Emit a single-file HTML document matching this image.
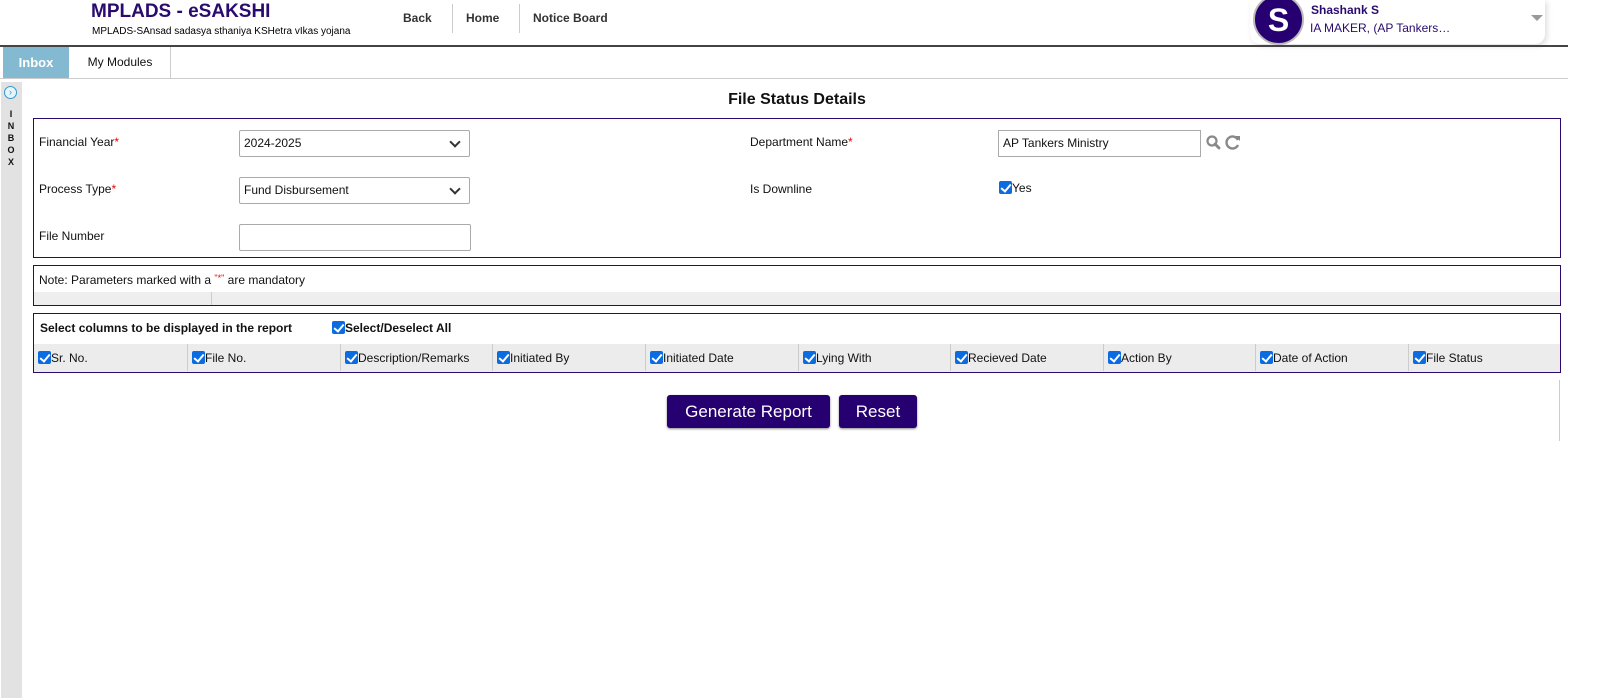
<!DOCTYPE html>
<html><head><meta charset="utf-8"><style>
*{box-sizing:border-box;margin:0;padding:0}
body{width:1597px;height:698px;position:relative;background:#fff;font-family:"Liberation Sans",Arial,sans-serif;font-size:12px;color:#111;overflow:hidden}
.a{position:absolute}
.cb{display:inline-block;width:13px;height:13px;background:#0b6be0;border-radius:2px;position:relative;vertical-align:-2px}
.cb:after{content:"";position:absolute;left:4px;top:1px;width:4px;height:8px;border:solid #fff;border-width:0 2px 2px 0;transform:rotate(40deg)}
.box{position:absolute;border:1px solid #2a0a6e}
.inp{position:absolute;border:1px solid #aaa;height:27px;padding:5px 4px;font-size:12px;background:#fff}
.sel{border-radius:2px}
.chev{position:absolute;right:10px;top:7px;width:8px;height:8px;border:solid #333;border-width:0 2px 2px 0;transform:rotate(45deg)}
.req{color:#e00}
.col{position:absolute;top:0;height:27px;border-left:1px solid #ccc;padding:7px 4px;font-size:12px}
.btn{position:absolute;background:#260070;color:#fff;border-radius:3px;font-size:17px;text-align:center;line-height:33px;height:33px;box-shadow:0 1px 2px #888}
</style></head><body>
<div class="a" style="left:91px;top:1px;font-size:19px;font-weight:bold;color:#2a0a6e">MPLADS - eSAKSHI</div>
<div class="a" style="left:92px;top:26px;font-size:10px;color:#000">MPLADS-SAnsad sadasya sthaniya KSHetra vIkas yojana</div>
<div class="a" style="left:403px;top:11px;font-size:12px;font-weight:bold;color:#333">Back</div>
<div class="a" style="left:452px;top:4px;width:1px;height:29px;background:#ccc"></div>
<div class="a" style="left:466px;top:11px;font-size:12px;font-weight:bold;color:#333">Home</div>
<div class="a" style="left:519px;top:4px;width:1px;height:29px;background:#ccc"></div>
<div class="a" style="left:533px;top:11px;font-size:12px;font-weight:bold;color:#333">Notice Board</div>
<div class="a" style="left:1250px;top:0;width:295px;height:44px;background:#fff;border-radius:0 0 10px 10px;box-shadow:2px 2px 6px #ddd"></div>
<div class="a" style="left:1253px;top:-6px;width:51px;height:51px;border-radius:50%;background:#260070;border:2px solid #bbb;color:#fff;font-size:32px;font-weight:bold;text-align:center;line-height:48px">S</div>
<div class="a" style="left:1311px;top:3px;font-size:12px;font-weight:bold;color:#2a0a6e">Shashank S</div>
<div class="a" style="left:1310px;top:21px;font-size:12px;color:#2a0a6e">IA MAKER, (AP Tankers…</div>
<div class="a" style="left:1531px;top:15px;border:6px solid transparent;border-top:6px solid #999"></div>
<div class="a" style="left:0;top:45px;width:1568px;height:2px;background:#444"></div>
<div class="a" style="left:3px;top:47px;width:66px;height:31px;background:#84b9d2;color:#fff;font-size:13px;font-weight:bold;text-align:center;line-height:31px">Inbox</div>
<div class="a" style="left:70px;top:47px;width:101px;height:31px;border-right:1px solid #ccc;font-size:12px;text-align:center;line-height:31px">My Modules</div>
<div class="a" style="left:0;top:78px;width:1568px;height:1px;background:#ccc"></div>
<div class="a" style="left:1px;top:82px;width:21px;height:616px;background:#e2e2e2"></div>
<div class="a" style="left:4px;top:86px;width:13px;height:13px;border-radius:50%;border:1px solid #39c;background:#e6f4fb;color:#39c;font-size:9px;line-height:11px;text-align:center">›</div>
<div class="a" style="left:7px;top:108px;font-size:9px;font-weight:bold;line-height:12px;text-align:center;width:8px">I<br>N<br>B<br>O<br>X</div>
<div class="a" style="left:33px;top:91px;width:1528px;text-align:center;font-size:16px;font-weight:bold">File Status Details</div>
<div class="box" style="left:33px;top:118px;width:1528px;height:140px"></div>
<div class="a" style="left:39px;top:135px">Financial Year<span class="req">*</span></div>
<div class="inp sel" style="left:239px;top:130px;width:231px">2024-2025<span class="chev"></span></div>
<div class="a" style="left:39px;top:182px">Process Type<span class="req">*</span></div>
<div class="inp sel" style="left:239px;top:177px;width:231px">Fund Disbursement<span class="chev"></span></div>
<div class="a" style="left:39px;top:229px">File Number</div>
<div class="inp" style="left:239px;top:224px;width:232px;border-radius:2px"></div>
<div class="a" style="left:750px;top:135px">Department Name<span class="req">*</span></div>
<div class="inp" style="left:998px;top:130px;width:203px">AP Tankers Ministry</div>
<svg class="a" style="left:1205px;top:134px" width="38" height="18" viewBox="0 0 38 18"><circle cx="7" cy="7" r="4.5" fill="none" stroke="#888" stroke-width="2.2"/><line x1="10" y1="10" x2="14" y2="14" stroke="#888" stroke-width="2.8" stroke-linecap="round"/><path d="M33 6 A6 6 0 1 0 33 11" fill="none" stroke="#888" stroke-width="2.4"/><path d="M30 2 L35 2 L35 7 Z" fill="#888"/></svg>
<div class="a" style="left:750px;top:182px">Is Downline</div>
<div class="a" style="left:999px;top:181px"><span class="cb"></span>Yes</div>
<div class="box" style="left:33px;top:265px;width:1528px;height:41px"></div>
<div class="a" style="left:39px;top:273px">Note: Parameters marked with a <span class="req" style="font-size:9px;vertical-align:3px">"*"</span> are mandatory</div>
<div class="a" style="left:34px;top:292px;width:1526px;height:13px;background:#eee"></div>
<div class="a" style="left:211px;top:292px;width:1px;height:13px;background:#ccc"></div>
<div class="box" style="left:33px;top:313px;width:1528px;height:60px"></div>
<div class="a" style="left:40px;top:321px;font-weight:bold">Select columns to be displayed in the report</div>
<div class="a" style="left:332px;top:321px;font-weight:bold"><span class="cb"></span>Select/Deselect All</div>
<div class="a" style="left:34px;top:344px;width:1526px;height:28px;background:#ececec">
<div class="col" style="left:0;border:0"><span class="cb"></span>Sr. No.</div>
<div class="col" style="left:153px"><span class="cb"></span>File No.</div>
<div class="col" style="left:306px"><span class="cb"></span>Description/Remarks</div>
<div class="col" style="left:458px"><span class="cb"></span>Initiated By</div>
<div class="col" style="left:611px"><span class="cb"></span>Initiated Date</div>
<div class="col" style="left:764px"><span class="cb"></span>Lying With</div>
<div class="col" style="left:916px"><span class="cb"></span>Recieved Date</div>
<div class="col" style="left:1069px"><span class="cb"></span>Action By</div>
<div class="col" style="left:1221px"><span class="cb"></span>Date of Action</div>
<div class="col" style="left:1374px"><span class="cb"></span>File Status</div>
</div>
<div class="a" style="left:1559px;top:380px;width:1px;height:61px;background:#ccc"></div>
<div class="btn" style="left:667px;top:395px;width:163px">Generate Report</div>
<div class="btn" style="left:839px;top:395px;width:78px">Reset</div>
</body></html>
